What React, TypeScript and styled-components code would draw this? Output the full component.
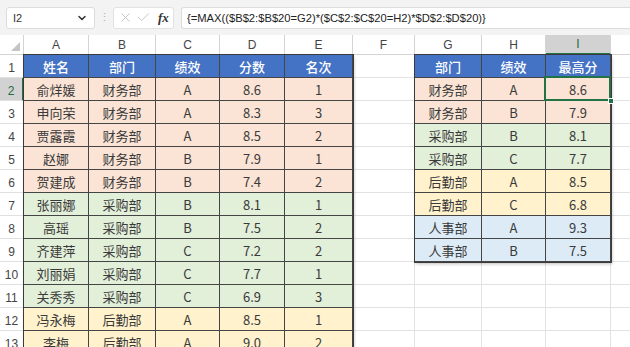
import React from "react";
import styled, { createGlobalStyle } from "styled-components";
import { X, Check, ChevronDown } from "lucide-react";

const Global = createGlobalStyle`
  html, body { margin: 0; padding: 0; background: #ffffff; overflow: hidden; }
  body { font-family: "Noto Sans CJK SC", "Liberation Sans", sans-serif; }
`;

const WIDTHS = [24, 65, 67, 64, 65, 68, 62, 67, 64, 65, 64];
const COLS = ["A", "B", "C", "D", "E", "F", "G", "H", "I", "J"];
const ROW_H = 23;
const ROWS = 13;

const FILLS: Record<string, string> = {
  head: "#4472c4",
  pink: "#fbe4d5",
  green: "#e2efd9",
  yellow: "#fff2cc",
  blue: "#ddebf7",
};

const Page = styled.div`
  width: 630px;
  height: 347px;
  overflow: hidden;
  display: flex;
  flex-direction: column;
`;

const TopBar = styled.div`
  height: 35px;
  flex: none;
  background: #f3f3f3;
  display: flex;
  align-items: center;
  padding: 0 0 0 6px;
  box-sizing: border-box;
`;

const NameBox = styled.div`
  width: 89px;
  height: 22px;
  box-sizing: border-box;
  background: #ffffff;
  border: 1px solid #dcdcdc;
  border-radius: 3px;
  display: flex;
  align-items: center;
  justify-content: space-between;
  padding: 0 6px 0 6px;
  font-family: "Liberation Sans", sans-serif;
  font-size: 11px;
  color: #333;
`;

const Sep = styled.div`
  width: 18px;
  text-align: center;
  color: #b0b0b0;
  font-size: 11px;
  font-family: "Liberation Sans", sans-serif;
`;

const FxBox = styled.div`
  width: 61px;
  height: 22px;
  box-sizing: border-box;
  background: #ffffff;
  border: 1px solid #e2e2e2;
  border-radius: 3px;
  display: flex;
  align-items: center;
  padding: 0 4px 0 4px;
  gap: 3px;
  color: #c2c2c2;
`;

const Fx = styled.span`
  font-family: "Liberation Serif", serif;
  font-style: italic;
  font-weight: bold;
  font-size: 13px;
  color: #333;
  margin-left: 4px;
`;

const FormulaBox = styled.div`
  flex: 1;
  margin-left: 7px;
  height: 22px;
  box-sizing: border-box;
  background: #ffffff;
  border: 1px solid #dcdcdc;
  border-right: none;
  border-radius: 3px 0 0 3px;
  display: flex;
  align-items: center;
  padding-left: 5px;
  font-family: "Liberation Sans", sans-serif;
  font-size: 11.2px;
  color: #222;
  white-space: nowrap;
`;

const Sheet = styled.div`
  display: grid;
  grid-template-columns: ${WIDTHS.map((w) => w + "px").join(" ")};
  grid-template-rows: 20px repeat(${ROWS}, ${ROW_H}px);
  background: #ffffff;
`;

const Corner = styled.div`
  grid-column: 1;
  grid-row: 1;
  position: relative;
  border-right: 1px solid #d4d4d4;
  border-bottom: 1px solid #d4d4d4;
  &::after {
    content: "";
    position: absolute;
    right: 3px;
    bottom: 3px;
    border-left: 9px solid transparent;
    border-bottom: 9px solid #c4c4c4;
  }
`;

const ColHead = styled.div<{ $active?: boolean; $c: number }>`
  grid-row: 1;
  grid-column: ${(p) => p.$c};
  box-sizing: border-box;
  display: flex;
  align-items: center;
  justify-content: center;
  font-family: "Liberation Sans", sans-serif;
  font-size: 12px;
  color: ${(p) => (p.$active ? "#1e6b41" : "#444")};
  background: ${(p) => (p.$active ? "#d2d2d2" : "#ffffff")};
  border-right: 1px solid #d4d4d4;
  border-bottom: ${(p) => (p.$active ? "2px solid #217346" : "1px solid #d4d4d4")};
`;

const RowHead = styled.div<{ $active?: boolean; $r: number }>`
  grid-column: 1;
  grid-row: ${(p) => p.$r};
  box-sizing: border-box;
  display: flex;
  align-items: flex-end;
  justify-content: center;
  padding-bottom: 2px;
  font-family: "Liberation Sans", sans-serif;
  font-size: 12px;
  color: ${(p) => (p.$active ? "#1e6b41" : "#444")};
  background: ${(p) => (p.$active ? "#d2d2d2" : "#ffffff")};
  border-right: ${(p) => (p.$active ? "2px solid #217346" : "1px solid #d4d4d4")};
  border-bottom: 1px solid #e0e0e0;
`;

const Blank = styled.div<{ $r: number; $c: number }>`
  grid-row: ${(p) => p.$r};
  grid-column: ${(p) => p.$c};
  box-sizing: border-box;
  border-right: 1px solid #e2e2e2;
  border-bottom: 1px solid #e2e2e2;
`;

const Table = styled.div<{ $col: number; $span: number; $rows: number; $cols: string }>`
  grid-column: ${(p) => p.$col} / span ${(p) => p.$span};
  grid-row: 2 / span ${(p) => p.$rows};
  display: grid;
  grid-template-columns: ${(p) => p.$cols};
  grid-template-rows: repeat(${(p) => p.$rows}, ${ROW_H}px);
  box-shadow: 0 0 0 1px #3a3a3a, 1px 2px 3px rgba(0, 0, 0, 0.25);
  z-index: 1;
`;

const Cell = styled.div<{ $fill: string; $selected?: boolean }>`
  position: relative;
  box-sizing: border-box;
  display: flex;
  align-items: center;
  justify-content: center;
  padding-top: 1px;
  background: ${(p) => FILLS[p.$fill]};
  border-right: 1px solid #454545;
  border-bottom: 1px solid #454545;
  font-size: 13px;
  color: ${(p) => (p.$fill === "head" ? "#ffffff" : "#3a3a3a")};
  font-weight: ${(p) => (p.$fill === "head" ? 500 : 400)};
  font-family: "Noto Sans CJK SC", "Liberation Sans", sans-serif;
  &::after {
    content: "";
    display: ${(p) => (p.$selected ? "block" : "none")};
    position: absolute;
    inset: -2px -1px -1px -2px;
    border: 2px solid #217346;
    pointer-events: none;
  }
  &::before {
    content: "";
    display: ${(p) => (p.$selected ? "block" : "none")};
    position: absolute;
    right: -4px;
    bottom: -4px;
    width: 6px;
    height: 6px;
    background: #217346;
    border: 1px solid #ffffff;
    box-sizing: border-box;
    z-index: 2;
  }
`;

const left = [
  ["俞烊媛", "财务部", "A", "8.6", "1"],
  ["申向荣", "财务部", "A", "8.3", "3"],
  ["贾露霞", "财务部", "A", "8.5", "2"],
  ["赵娜", "财务部", "B", "7.9", "1"],
  ["贺建成", "财务部", "B", "7.4", "2"],
  ["张丽娜", "采购部", "B", "8.1", "1"],
  ["高瑶", "采购部", "B", "7.5", "2"],
  ["齐建萍", "采购部", "C", "7.2", "2"],
  ["刘丽娟", "采购部", "C", "7.7", "1"],
  ["关秀秀", "采购部", "C", "6.9", "3"],
  ["冯永梅", "后勤部", "A", "8.5", "1"],
  ["李梅", "后勤部", "A", "9.0", "2"],
];

const right = [
  ["财务部", "A", "8.6"],
  ["财务部", "B", "7.9"],
  ["采购部", "B", "8.1"],
  ["采购部", "C", "7.7"],
  ["后勤部", "A", "8.5"],
  ["后勤部", "C", "6.8"],
  ["人事部", "A", "9.3"],
  ["人事部", "B", "7.5"],
];

const deptFill = (d: string) =>
  d === "财务部" ? "pink" : d === "采购部" ? "green" : d === "后勤部" ? "yellow" : "blue";

export default function App() {
  const rowsArr = Array.from({ length: ROWS }, (_, i) => i + 1);
  return (
    <Page>
      <Global />
      <TopBar>
        <NameBox>
          <span>I2</span>
          <ChevronDown size={12} strokeWidth={3} color="#333" />
        </NameBox>
        <Sep>⋮</Sep>
        <FxBox>
          <X size={15} strokeWidth={1.5} />
          <Check size={15} strokeWidth={1.5} />
          <Fx>fx</Fx>
        </FxBox>
        <FormulaBox>{"{=MAX(($B$2:$B$20=G2)*($C$2:$C$20=H2)*$D$2:$D$20)}"}</FormulaBox>
      </TopBar>
      <Sheet>
        <Corner />
        {COLS.map((c, ci) => (
          <ColHead key={c} $c={ci + 2} $active={c === "I"}>
            {c}
          </ColHead>
        ))}
        {rowsArr.map((r) => (
          <React.Fragment key={r}>
            <RowHead $r={r + 1} $active={r === 2}>
              {r}
            </RowHead>
            {COLS.map((c, ci) => (
              <Blank key={c} $r={r + 1} $c={ci + 2} />
            ))}
          </React.Fragment>
        ))}
        <Table $col={2} $span={5} $rows={13} $cols={WIDTHS.slice(1, 6).map((w) => w + "px").join(" ")}>
          {["姓名", "部门", "绩效", "分数", "名次"].map((h) => (
            <Cell key={h} $fill="head">
              {h}
            </Cell>
          ))}
          {left.map((row, i) =>
            row.map((v, j) => (
              <Cell key={i + "-" + j} $fill={deptFill(row[1])}>
                {v}
              </Cell>
            ))
          )}
        </Table>
        <Table $col={8} $span={3} $rows={9} $cols={WIDTHS.slice(7, 10).map((w) => w + "px").join(" ")}>
          {["部门", "绩效", "最高分"].map((h) => (
            <Cell key={h} $fill="head">
              {h}
            </Cell>
          ))}
          {right.map((row, i) =>
            row.map((v, j) => (
              <Cell key={i + "-" + j} $fill={deptFill(row[0])} $selected={i === 0 && j === 2}>
                {v}
              </Cell>
            ))
          )}
        </Table>
      </Sheet>
    </Page>
  );
}
